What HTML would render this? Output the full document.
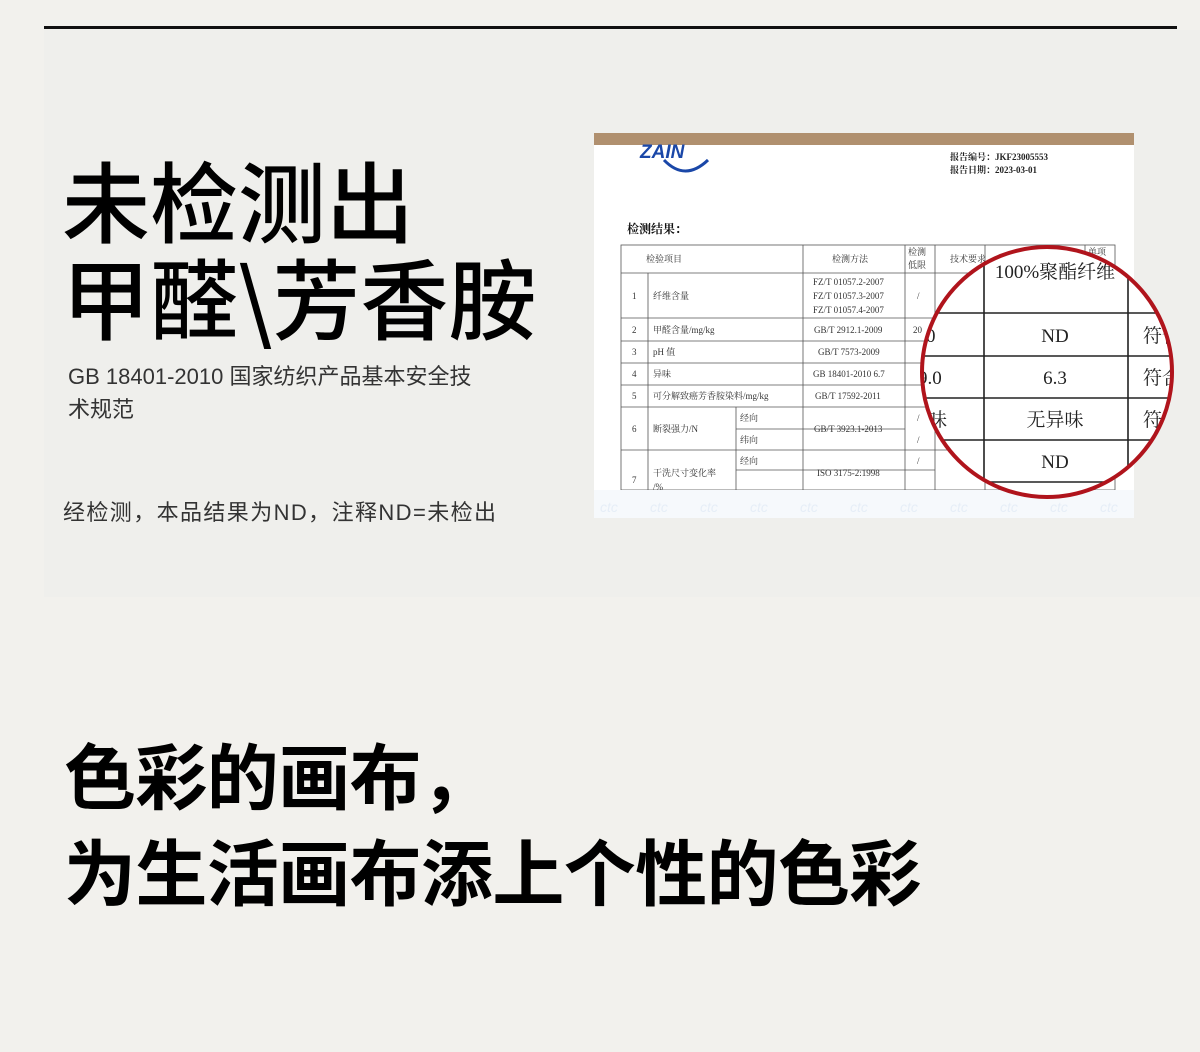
<!DOCTYPE html>
<html><head><meta charset="utf-8">
<style>
body{margin:0;width:1200px;height:1052px;background:#f2f1ed;position:relative;overflow:hidden;font-family:"Liberation Sans","Noto Sans CJK SC",sans-serif;}
.panel{position:absolute;left:44px;top:30px;width:1156px;height:567px;background:#efefec;}
.rule{position:absolute;left:44px;top:26px;width:1133px;height:3px;background:#111;}
.h1{position:absolute;left:62px;top:150px;font-size:88px;line-height:97px;color:#000;font-family:"Noto Sans CJK SC",sans-serif;font-weight:500;letter-spacing:0px;}
.sub{position:absolute;left:68px;top:360px;font-size:22px;line-height:33px;color:#333;width:440px;font-family:"Liberation Sans","Noto Sans CJK SC",sans-serif;}
.note{position:absolute;left:63px;top:497px;font-size:22px;line-height:32px;color:#333;font-family:"Liberation Sans","Noto Sans CJK SC",sans-serif;letter-spacing:1.4px;}
.h2{position:absolute;left:64px;top:725px;font-size:72px;line-height:96px;color:#000;font-weight:700;font-family:"Noto Sans CJK SC",sans-serif;letter-spacing:-0.6px;}
svg{position:absolute;left:0;top:0;}
</style></head><body>
<div class="panel"></div>
<div class="rule"></div>
<div class="h1">未检测出<br>甲醛\芳香胺</div>
<div class="sub">GB 18401-2010 国家纺织产品基本安全技<br>术规范</div>
<div class="note">经检测，本品结果为ND，注释ND=未检出</div>
<div class="h2">色彩的画布，<br>为生活画布添上个性的色彩</div>
<svg width="1200" height="1052" viewBox="0 0 1200 1052" font-family="Liberation Serif,Noto Serif CJK SC,serif">
<rect x="594" y="133" width="540" height="385" fill="#fff"/>
<rect x="594" y="133" width="540" height="12" fill="#b0906f"/>
<text x="640" y="158" font-size="19" font-weight="bold" fill="#1a47a8" font-family="Liberation Sans,sans-serif" font-style="italic">ZAIN</text>
<path d="M664 160 Q685 182 708 160" stroke="#1a47a8" stroke-width="3" fill="none"/>
<text x="950" y="160" font-size="9" font-weight="bold" fill="#222">报告编号：JKF23005553</text>
<text x="950" y="173" font-size="9" font-weight="bold" fill="#222">报告日期：2023-03-01</text>
<text x="627" y="233" font-size="12" font-weight="bold" fill="#111">检测结果：</text>
<g stroke="#555" stroke-width="0.8" fill="none">
<rect x="621" y="245" width="494" height="245"/>
<path d="M621 273H1115M621 318H1115M621 341H1115M621 363H1115M621 385H1115M621 407H1115M621 450H1115M736 429H803M803 429H905M736 470H803M803 470H935"/>
<path d="M648 273V490M803 245V490M905 245V490M935 245V490M985 245V490M1085 245V490M736 407V490"/>
</g>
<g font-size="9" fill="#333">
<text x="646" y="262">检验项目</text><text x="832" y="262">检测方法</text><text x="908" y="255">检测</text><text x="908" y="268">低限</text><text x="950" y="262">技术要求</text><text x="1088" y="255">单项</text>
<text x="632" y="299">1</text><text x="653" y="299">纤维含量</text>
<text x="813" y="285">FZ/T 01057.2-2007</text><text x="813" y="299">FZ/T 01057.3-2007</text><text x="813" y="313">FZ/T 01057.4-2007</text><text x="917" y="299">/</text>
<text x="632" y="333">2</text><text x="653" y="333">甲醛含量/mg/kg</text><text x="814" y="333">GB/T 2912.1-2009</text><text x="913" y="333">20</text>
<text x="632" y="355">3</text><text x="653" y="355">pH 值</text><text x="818" y="355">GB/T 7573-2009</text>
<text x="632" y="377">4</text><text x="653" y="377">异味</text><text x="813" y="377">GB 18401-2010 6.7</text>
<text x="632" y="399">5</text><text x="653" y="399">可分解致癌芳香胺染料/mg/kg</text><text x="815" y="399">GB/T 17592-2011</text>
<text x="632" y="432">6</text><text x="653" y="432">断裂强力/N</text><text x="740" y="421">经向</text><text x="740" y="443">纬向</text><text x="814" y="432">GB/T 3923.1-2013</text><text x="917" y="421">/</text><text x="917" y="443">/</text>
<text x="632" y="483">7</text><text x="653" y="476">干洗尺寸变化率</text><text x="653" y="490">/%</text><text x="740" y="464">经向</text><text x="817" y="476">ISO 3175-2:1998</text><text x="917" y="464">/</text>
</g>
<rect x="594" y="490" width="540" height="28" fill="#f6f9fc"/>
<g font-size="14" fill="#e6eef7" font-family="Liberation Sans,sans-serif" font-style="italic">
<text x="600" y="512">ctc</text><text x="650" y="512">ctc</text><text x="700" y="512">ctc</text><text x="750" y="512">ctc</text><text x="800" y="512">ctc</text><text x="850" y="512">ctc</text><text x="900" y="512">ctc</text><text x="950" y="512">ctc</text><text x="1000" y="512">ctc</text><text x="1050" y="512">ctc</text><text x="1100" y="512">ctc</text>
</g>
<defs><clipPath id="c"><circle cx="1047" cy="372" r="125"/></clipPath></defs>
<circle cx="1047" cy="372" r="125" fill="#fff"/>
<g clip-path="url(#c)">
<g stroke="#222" stroke-width="1.6"><path d="M984 240V500M1128 240V500M900 313H1200M900 356H1200M900 398H1200M900 440H1200M900 482H1200"/></g>
<g font-size="19" fill="#222">
<text x="1055" y="278" text-anchor="middle">100%聚酯纤维</text>
<text x="1055" y="342" text-anchor="middle">ND</text><text x="1055" y="384" text-anchor="middle">6.3</text>
<text x="1055" y="426" text-anchor="middle">无异味</text><text x="1055" y="468" text-anchor="middle">ND</text>
<text x="926" y="342">0</text><text x="918" y="384">9.0</text><text x="928" y="426">味</text>
<text x="1143" y="342">符合</text><text x="1143" y="384">符合</text><text x="1143" y="426">符合</text>
</g>
</g>
<circle cx="1047" cy="372" r="125" fill="none" stroke="#b0141c" stroke-width="4"/>
</svg>
</body></html>
